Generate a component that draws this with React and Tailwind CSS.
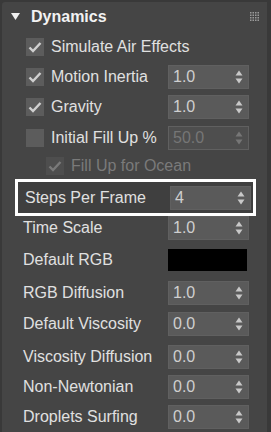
import React from 'react';

function Check({ checked, disabled }) {
    return (
        <div className={`w-[18px] h-[18px] shrink-0 flex items-center justify-center ${disabled ? 'bg-[#4e4e4e]' : 'bg-[#5c5c5c]'}`}>
            {checked && (
                <svg width="14" height="12" viewBox="0 0 14 12">
                    <path d="M1.5 6.5 L5 10 L12.5 2" fill="none" stroke={disabled ? '#7a7a7a' : '#d0d0d0'} strokeWidth="2.4" />
                </svg>
            )}
        </div>
    );
}

function Spinner({ value, disabled }) {
    return (
        <div className={`w-[81px] h-[24px] shrink-0 flex items-center justify-between pl-[4px] pr-[5px] border border-[#606060] ${disabled ? 'bg-[#4e4e4e] text-[#767676]' : 'bg-[#5a5a5a] text-[#cfcfcf]'}`}>
            <span>{value}</span>
            <svg width="8" height="14" viewBox="0 0 8 14">
                <path d="M4 0.5 L7.5 5.5 L0.5 5.5 Z" fill={disabled ? '#767676' : '#c8c8c8'} />
                <path d="M0.5 8.5 L7.5 8.5 L4 13.5 Z" fill={disabled ? '#767676' : '#c8c8c8'} />
            </svg>
        </div>
    );
}

function Row({ h, children }) {
    return <div className={`flex items-center ${h}`}>{children}</div>;
}

function Field({ label, value, h }) {
    return (
        <Row h={h}>
            <div className="w-[157px] pl-[12px]">{label}</div>
            <Spinner value={value} />
        </Row>
    );
}

function App() {
    return (
        <div className="w-[271px] h-[432px] bg-[#393939] overflow-hidden text-[16px] text-[#e0e0e0]" style={{ fontFamily: '"Liberation Sans", Arial, sans-serif' }}>
            <div className="ml-[2px] mt-[2px] w-[265px] h-[430px] bg-[#454545] rounded-tl-[3px] pl-[9px]">
                <div className="flex items-center h-[29px]">
                    <svg width="9" height="7" viewBox="0 0 9 7">
                        <path d="M0 0 L9 0 L4.5 7 Z" fill="#f0f0f0" />
                    </svg>
                    <span className="ml-[11px] font-bold text-[#f2f2f2]">Dynamics</span>
                    <svg width="10" height="10" viewBox="0 0 10 10" className="ml-auto mr-[7px]">
                        {[0, 1, 2, 3].map((r) =>
                            [0, 1, 2, 3].map((c) => (
                                <rect key={`${r}-${c}`} x={c * 2.5} y={r * 2.5} width="1.5" height="1.5" fill="#9a9a9a" />
                            ))
                        )}
                    </svg>
                </div>

                <Row h="h-[31px]">
                    <div className="ml-[15px]"><Check checked /></div>
                    <span className="ml-[7px]">Simulate Air Effects</span>
                </Row>
                <Row h="h-[30px]">
                    <div className="ml-[15px]"><Check checked /></div>
                    <span className="ml-[7px] w-[117px]">Motion Inertia</span>
                    <Spinner value="1.0" />
                </Row>
                <Row h="h-[30px]">
                    <div className="ml-[15px]"><Check checked /></div>
                    <span className="ml-[7px] w-[117px]">Gravity</span>
                    <Spinner value="1.0" />
                </Row>
                <Row h="h-[31px]">
                    <div className="ml-[15px]"><Check /></div>
                    <span className="ml-[7px] w-[117px]">Initial Fill Up %</span>
                    <Spinner value="50.0" disabled />
                </Row>
                <Row h="h-[26px]">
                    <div className="ml-[35px]"><Check checked disabled /></div>
                    <span className="ml-[7px] text-[#7a7a7a]">Fill Up for Ocean</span>
                </Row>

                <div className="ml-[4px] w-[241px] h-[37px] border-[3px] border-white bg-[#3f3f3f] flex items-center">
                    <div className="w-[152px] pl-[7px]">Steps Per Frame</div>
                    <Spinner value="4" />
                </div>

                <Field label="Time Scale" value="1.0" h="h-[24px]" />
                <Row h="h-[40px]">
                    <div className="w-[157px] pl-[12px]">Default RGB</div>
                    <div className="w-[79px] h-[22px] bg-black" />
                </Row>
                <Field label="RGB Diffusion" value="1.0" h="h-[25px]" />
                <Field label="Default Viscosity" value="0.0" h="h-[37px]" />
                <Field label="Viscosity Diffusion" value="0.0" h="h-[30px]" />
                <Field label="Non-Newtonian" value="0.0" h="h-[30px]" />
                <Field label="Droplets Surfing" value="0.0" h="h-[30px]" />
            </div>
        </div>
    );
}

export default App;
